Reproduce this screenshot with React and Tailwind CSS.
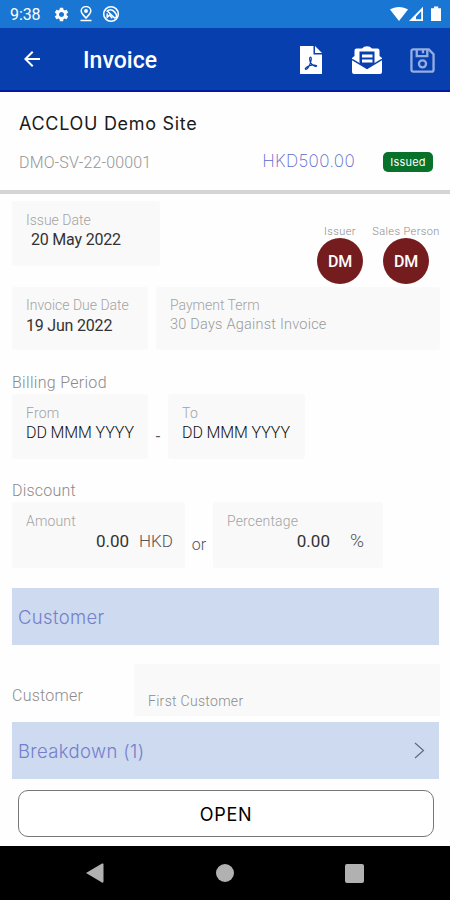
import { MdSettings, MdArrowBack } from "react-icons/md";

const StatusBar = () => (
  <div className="flex h-7 items-center bg-[#1976d2] pr-2 pl-[10px] text-white">
    <span className="w-[43px] pt-[2px] text-[16px] leading-7 tracking-[-0.1px] whitespace-nowrap">9:38</span>
    <MdSettings className="size-[17px]" />
    <svg className="ml-[9px] h-4 w-[14px]" viewBox="0 0 14 16" fill="none" stroke="currentColor" strokeWidth="1.5">
      <path d="M7 12C4.500 9.200 2.200 7.400 2.200 5a4.800 4.400 0 0 1 9.600 0C11.800 7.400 9.500 9.200 7 12Z" />
      <circle cx="7" cy="5" r="1.2" fill="currentColor" />
      <path d="M1.500 14.500h11" />
    </svg>
    <svg className="ml-[9px] size-[18px]" viewBox="0 0 18 18" fill="none" stroke="currentColor" strokeWidth="1.600">
      <circle cx="9" cy="9" r="7.300" />
      <path d="M4.500 6.500Q9 2.500 12.800 7.200T12.600 13M5.300 6 13 13.200M5.200 8.500v3.800L7.500 10l2.800 3.300" strokeWidth="1.500" />
    </svg>
    <svg className="ml-auto h-4 w-[52px]" viewBox="0 0 52 16" fill="currentColor">
      <path d="M0 3.500C5 .1 13 .1 18 3.500L9 15Z" />
      <path fillRule="evenodd" d="M33 .8V15H19ZM31.200 5.200 26 10.800V13.300H31.200Z" />
      <path d="M42 2.200h2V.6h4.200v1.600H51V15H41V2.200Z" />
    </svg>
  </div>
);

const AppBar = () => (
  <div className="flex h-16 items-center border-b-2 border-[#0419a0] bg-[#083fae] pr-[15px] pl-5 text-white">
    <MdArrowBack className="size-6" />
    <h1 className="mt-1 ml-[39px] text-[23px] leading-8 font-medium tracking-[0.05px]">Invoice</h1>
    <svg className="mt-[1px] ml-auto h-7 w-[22px]" viewBox="0 0 22 28">
      <path d="M0 0H13.500V8.500H22V28H0Z" fill="white" />
      <path d="M15 0 22 7H15Z" fill="white" />
      <path d="M10.300 11c1.500 0 1 3.400.2 5.800-1 2.900-3.200 6.700-4.900 6.500-1.500-1 2.500-3.400 5-3.900 2.500-.6 6-.6 6.100.5-.3 1.600-4.200-.5-5.800-2.800-1.300-2-1.800-5.900-.6-6.100Z" fill="none" stroke="#083fae" strokeWidth="1.200" />
    </svg>
    <svg className="mt-[1px] ml-[30px] h-7 w-[30px]" viewBox="0 0 30 28">
      <path d="M0 12 2.500 10V4.500Q2.500 2.500 4.500 2.500h5.500Q12 .3 15 .3t5 2.200h5.500q2 0 2 2V10L30 12V26Q30 28 28 28H2Q0 28 0 26Z" fill="white" />
      <path d="M0 13.500 15 22.500 30 13.500" fill="none" stroke="#083fae" strokeWidth="1.500" />
      <path d="M7.500 5.500h15v12L15 22.500 7.500 17.500Z" fill="#083fae" />
      <path d="M10 8.500h10.500v3H10ZM10 13.500h10.500v3H10Z" fill="white" />
    </svg>
    <svg className="mt-[3px] ml-[28px] size-[25px]" viewBox="0 0 26 26" fill="none" stroke="#94aee0" strokeWidth="2.400">
      <path d="M3.500 1.500H19.500L24.500 6.500V22.500Q24.500 24.500 22.500 24.500H3.500Q1.500 24.500 1.500 22.500V3.500Q1.500 1.500 3.500 1.500Z" />
      <path d="M7 2V8.500H18V2M13.500 2V5.500" />
      <circle cx="13" cy="16.500" r="3.700" />
    </svg>
  </div>
);

const Field = ({ label, value, className = "", labelClass = "tracking-[0.2px]", valueClass = "" }) => (
  <div className={`rounded-[3px] bg-[#f9f9f9] pt-[9px] pl-[14px] ${className}`}>
    <p className={`pt-px text-[14px] leading-[18px] font-light text-[#a3a3a3] ${labelClass}`}>{label}</p>
    <p className={`-mt-px leading-6 whitespace-nowrap ${valueClass}`}>{value}</p>
  </div>
);

const AmountField = ({ label, unit, className = "", unitClass = "" }) => (
  <div className={`h-[66px] rounded-[3px] bg-[#f9f9f9] pt-[10px] pl-[14px] ${className}`}>
    <p className="text-[14px] leading-[18px] font-light tracking-[0.15px] text-[#a3a3a3]">{label}</p>
    <div className="-mt-px flex justify-end text-[17px] leading-6">
      <span className="text-[#333]">0.00</span>
      <span className={`font-light text-[#555] ${unitClass}`}>{unit}</span>
    </div>
  </div>
);

const Person = ({ role, className }) => (
  <div className={`flex flex-col items-center ${className}`}>
    <span className="pt-px text-[11px] leading-[14px] font-light tracking-[0.4px] whitespace-nowrap text-[#8c8c8c]">{role}</span>
    <span className="-mt-px flex size-[46px] items-center justify-center rounded-full bg-[#751c1e] pt-px text-[16px] font-medium tracking-[-0.2px] text-white">
      DM
    </span>
  </div>
);

const SectionBar = ({ title, arrow }) => (
  <div className="mr-px flex h-[57px] items-center justify-between bg-[#cddaef] pr-[14px] pl-[6px]">
    <h2 className="pt-[2px] font-['Inter',sans-serif] text-[18.5px] font-light tracking-[0.35px] text-[#7580cb]">{title}</h2>
    {arrow && (
      <svg className="h-[18px] w-3" viewBox="0 0 12 18" fill="none" stroke="#5e6b84" strokeWidth="1.200">
        <path d="M2 1 10.500 8.500 2 16" />
      </svg>
    )}
  </div>
);

export default function App() {
  return (
    <div className="flex h-[900px] w-[450px] flex-col overflow-hidden bg-[#fefefe] font-['Roboto',sans-serif]">
      <StatusBar />
      <AppBar />

      {/* Invoice summary */}
      <header className="h-[102px] border-b-4 border-[#d4d4d4] pt-5 pr-[17px] pl-[19px]">
        <h2 className="font-['Inter',sans-serif] text-[18px] leading-6 tracking-[0.7px] text-[#1a1a1a]">ACCLOU Demo Site</h2>
        <div className="mt-[15px] flex h-[22px] items-center">
          <span className="pt-[2px] text-[16px] font-light tracking-[0.15px] text-[#969696]">DMO-SV-22-00001</span>
          <span className="ml-auto font-['Inter',sans-serif] text-[17px] font-extralight tracking-[0.3px] text-[#5b69cc]">HKD500.00</span>
          <span className="ml-7 flex h-5 w-[50px] items-center justify-center rounded-[5px] bg-[#08712a] pt-px font-['Inter',sans-serif] text-[11px] tracking-[0.2px] text-white">
            Issued
          </span>
        </div>
      </header>

      <main className="flex h-[652px] flex-col pt-[7px] pr-[10px] pl-3">
        <div className="flex h-[86px] items-start">
          <Field label="Issue Date" value="20 May 2022" className="h-[65px] w-[148px]" labelClass="tracking-[0]" valueClass="pl-[5px] text-[16px] tracking-[-0.2px] text-[#333]" />
          <div className="ml-auto flex pt-[23px]">
            <Person role="Issuer" className="w-[46px]" />
            <Person role="Sales Person" className="mr-[1px] ml-[10px] w-[66px]" />
          </div>
        </div>

        <div className="flex gap-2">
          <Field label="Invoice Due Date" value="19 Jun 2022" className="h-[63px] w-[136px]" labelClass="-mt-px tracking-[0]" valueClass="pt-px text-[16px] tracking-[-0.2px] text-[#333]" />
          <Field label="Payment Term" value="30 Days Against Invoice" className="h-[63px] w-[284px]" labelClass="-mt-px tracking-[0]" valueClass="text-[14.500px] font-light tracking-[0.23px] text-[#999]" />
        </div>

        <h3 className="mt-[22px] h-[22px] text-[16px] leading-[22px] font-light tracking-[0.3px] text-[#8a8a8a]">Billing Period</h3>
        <div className="flex">
          <Field label="From" value="DD MMM YYYY" className="h-[65px] w-[136px]" valueClass="text-[16px] font-light tracking-[-0.1px] text-[#111]" />
          <span className="w-5 pt-[31px] text-center text-[16px] leading-6 text-[#555]">-</span>
          <Field label="To" value="DD MMM YYYY" className="h-[65px] w-[137px]" valueClass="text-[16px] font-light tracking-[-0.1px] text-[#111]" />
        </div>

        <h3 className="mt-5 h-[23px] text-[16px] leading-[23px] font-light tracking-[0.2px] text-[#8a8a8a]">Discount</h3>
        <div className="flex">
          <AmountField label="Amount" unit="HKD" className="w-[173px] pr-3" unitClass="ml-[10px]" />
          <span className="w-7 pt-[31px] text-center text-[16px] leading-6 font-light text-[#555]">or</span>
          <AmountField label="Percentage" unit="%" className="w-[170px] pr-[19px]" unitClass="ml-[20px] text-[19px]" />
        </div>

        <div className="mt-5">
          <SectionBar title="Customer" />
        </div>
        <div className="mt-[19px] mb-[6px] flex h-[52px] text-[#8c8c8c]">
          <span className="w-[122px] pt-5 text-[16px] leading-6 font-light tracking-[0.25px]">Customer</span>
          <span className="flex-1 bg-[#f9f9f9] pt-[26px] pl-[14px] text-[14px] leading-[22px] font-light tracking-[0.3px]">First Customer</span>
        </div>
        <SectionBar title="Breakdown (1)" arrow />

        <button className="mt-[11px] mr-[6px] ml-[6px] h-[47px] rounded-[10px] border border-[#777] bg-white pt-px font-['Inter',sans-serif] text-[18px] tracking-[0.7px] text-black">
          OPEN
        </button>
      </main>

      {/* System navigation */}
      <nav className="flex h-[54px] items-center bg-black text-[#b1b1b1]">
        <svg className="ml-[86px] h-5 w-[18px]" viewBox="0 0 18 20" fill="currentColor">
          <path d="M0 10 16 .5Q17.500 0 17.500 1.500v17q0 1.500-1.500 1Z" />
        </svg>
        <span className="ml-[112px] size-[18px] rounded-full bg-[#b1b1b1]" />
        <span className="ml-[111px] size-[19px] rounded-[2px] bg-[#b1b1b1]" />
      </nav>
    </div>
  );
}
